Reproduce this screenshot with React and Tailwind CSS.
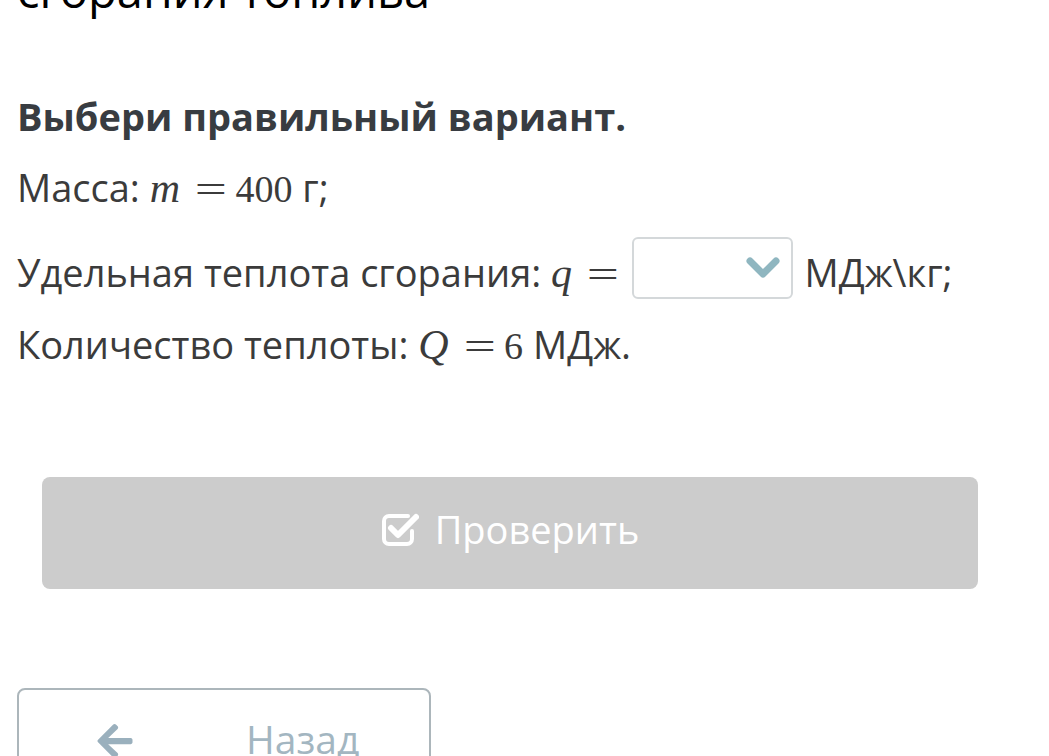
import React from "react";
import { FaArrowLeft } from "react-icons/fa";

const sans = { fontFamily: '"Open Sans", "Noto Sans", sans-serif' };
const serif = { fontFamily: '"Liberation Serif", "DejaVu Serif", serif' };

const V = ({ children }) => (
  <span className="italic text-[42px]" style={serif}>
    {children}
  </span>
);

const N = ({ children }) => (
  <span className="text-[38px]" style={serif}>
    {children}
  </span>
);

const Eq = () => (
  <span className="ml-[20px] mr-[14px] inline-block scale-x-150 text-[38px]" style={serif}>
    =
  </span>
);

const CheckSquare = () => (
  <svg width="38" height="36" viewBox="0 0 38 36" fill="none">
    <path
      d="M27 5 H8 a5 5 0 0 0 -5 5 V28 a5 5 0 0 0 5 5 H26 a5 5 0 0 0 5 -5 V20"
      stroke="white"
      strokeWidth="4"
      strokeLinecap="round"
    />
    <path
      d="M10 17 L17 24 L35 6"
      stroke="white"
      strokeWidth="6"
      strokeLinecap="round"
      strokeLinejoin="round"
    />
  </svg>
);

const Chevron = () => (
  <svg width="34" height="22" viewBox="0 0 34 22" fill="none">
    <path
      d="M4 4 L17 17 L30 4"
      stroke="#8fb6c0"
      strokeWidth="7"
      strokeLinecap="round"
      strokeLinejoin="round"
    />
  </svg>
);

const App = () => {
  return (
    <div className="w-[1049px] h-[756px] overflow-hidden bg-white pl-[17px]" style={sans}>
      {/* title, scrolled off */}
      <div className="-mt-[38px] text-[47px] leading-[56px] text-black">
        сгорания топлива
      </div>

      <div className="mt-[74px] text-[38px] leading-[48px] font-bold text-[#383c41]">
        Выбери правильный вариант.
      </div>

      <div className="mt-[23px] text-[38px] leading-[48px] text-[#3b3b3b]">
        Масса: <V>m</V>
        <Eq />
        <N>400</N> г;
      </div>

      <div className="mt-[24px] flex items-start text-[38px] leading-[48px] text-[#3b3b3b]">
        <span className="pt-[11px] whitespace-nowrap">
          Удельная теплота сгорания: <V>q</V>
          <Eq />
        </span>
        <div className="ml-[4px] flex h-[62px] w-[161px] shrink-0 items-center justify-end rounded-[6px] border-2 border-[#d4d8da] pr-[11px]">
          <Chevron />
        </div>
        <span className="pt-[11px] pl-[12px]">МДж\кг;</span>
      </div>

      <div className="mt-[21px] text-[38px] leading-[48px] text-[#3b3b3b]">
        Количество теплоты: <V>Q</V>
        <Eq />
        <N>6</N> МДж.
      </div>

      <div className="mt-[107px] ml-[25px] flex h-[112px] w-[936px] items-center justify-center gap-[16px] rounded-[8px] bg-[#cccccc] pb-[8px] text-[38px] text-white">
        <CheckSquare />
        <span>Проверить</span>
      </div>

      <div className="mt-[99px] flex h-[112px] w-[414px] items-start rounded-[8px] border-2 border-[#acb6bb] pt-[22px] text-[39px] leading-[54px] text-[#a3b6c1]">
        <FaArrowLeft className="ml-[76px] mt-[9px] text-[#9ab0bd]" size={40} />
        <span className="ml-[111px]">Назад</span>
      </div>
    </div>
  );
};

export default App;
